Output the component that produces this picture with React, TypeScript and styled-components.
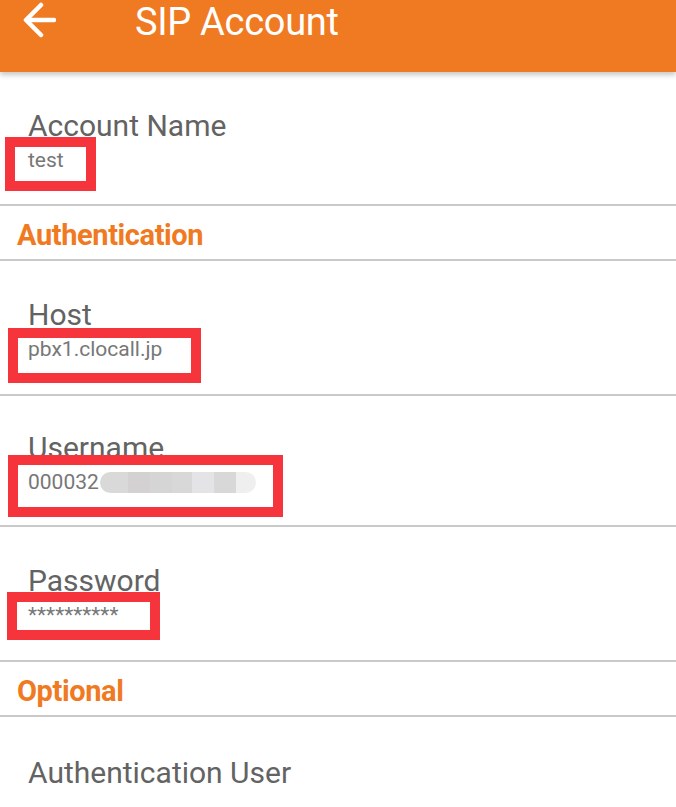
import React from "react";
import styled, { createGlobalStyle } from "styled-components";

const Global = createGlobalStyle`
  html, body { margin: 0; padding: 0; background: #ffffff; }
  body { font-family: Roboto, "Liberation Sans", Arial, sans-serif; overflow: hidden; }
`;

const Page = styled.div`
  width: 676px;
  height: 807px;
  background: #ffffff;
  overflow: hidden;
  position: relative;
`;

const AppBar = styled.header`
  height: 72px;
  background: #f07a22;
  display: flex;
  align-items: flex-start;
  box-shadow: 0 3px 5px rgba(0, 0, 0, 0.22);
  position: relative;
  z-index: 2;
`;

const BackButton = styled.div`
  width: 36px;
  height: 40px;
  margin-left: 21px;
  display: flex;
  align-items: center;
  justify-content: center;
`;

const Title = styled.h1`
  margin: 0 0 0 78px;
  font-family: Roboto, "Liberation Sans", sans-serif;
  font-weight: 400;
  font-size: 38px;
  line-height: 45px;
  color: #ffffff;
  letter-spacing: -0.3px;
`;

const List = styled.div`
  display: flex;
  flex-direction: column;
`;

const FieldRow = styled.div<{ $h: number; $pad: number }>`
  position: relative;
  height: ${(p) => p.$h}px;
  box-sizing: border-box;
  padding: ${(p) => p.$pad}px 0 0 28px;
  border-bottom: 2px solid #c9c9c9;
  display: flex;
  flex-direction: column;
`;

const Label = styled.div`
  font-size: 30px;
  line-height: 36px;
  color: #636363;
  font-weight: 400;
`;

const Value = styled.div`
  font-size: 21px;
  line-height: 24px;
  margin-top: 4px;
  color: #777777;
  display: flex;
  align-items: center;
`;

const SectionHeader = styled.div`
  height: 55px;
  box-sizing: border-box;
  border-bottom: 2px solid #c9c9c9;
  padding: 4px 0 0 17px;
  display: flex;
  align-items: center;
  font-size: 29px;
  font-weight: 700;
  color: #f07a22;
  letter-spacing: -0.4px;
`;

const Mark = styled.div<{ $x: number; $y: number; $w: number; $h: number }>`
  position: absolute;
  left: ${(p) => p.$x}px;
  top: ${(p) => p.$y}px;
  width: ${(p) => p.$w}px;
  height: ${(p) => p.$h}px;
  box-sizing: border-box;
  border: 10px solid #f5343c;
  pointer-events: none;
`;

const Redacted = styled.span`
  display: inline-flex;
  height: 21px;
  width: 156px;
  border-radius: 11px;
  overflow: hidden;
  margin-left: 1px;
  filter: blur(0.6px);
`;

const Chunk = styled.span<{ $c: string; $w: number }>`
  width: ${(p) => p.$w}px;
  height: 100%;
  background: ${(p) => p.$c};
`;

const BackArrow = () => (
  <svg width="34" height="38" viewBox="0 0 34 38" fill="none">
    <path
      d="M32 19H5M19 4L4 19L19 34"
      stroke="#ffffff"
      strokeWidth="4.5"
      strokeLinecap="round"
      strokeLinejoin="round"
    />
  </svg>
);

export default function App() {
  return (
    <Page>
      <Global />
      <AppBar>
        <BackButton>
          <BackArrow />
        </BackButton>
        <Title>SIP Account</Title>
      </AppBar>
      <List>
        <FieldRow $h={134} $pad={36}>
          <Label>Account Name</Label>
          <Value>test</Value>
          <Mark $x={5} $y={65} $w={91} $h={54} />
        </FieldRow>
        <SectionHeader>Authentication</SectionHeader>
        <FieldRow $h={135} $pad={36}>
          <Label>Host</Label>
          <Value>pbx1.clocall.jp</Value>
          <Mark $x={8} $y={67} $w={193} $h={55} />
        </FieldRow>
        <FieldRow $h={131} $pad={34}>
          <Label>Username</Label>
          <Value>
            000032
            <Redacted>
              <Chunk $c="#d9d9d9" $w={28} />
              <Chunk $c="#d3d1d1" $w={22} />
              <Chunk $c="#d6d5d5" $w={22} />
              <Chunk $c="#d9d8d8" $w={20} />
              <Chunk $c="#e4e4e6" $w={22} />
              <Chunk $c="#d8d8d8" $w={22} />
              <Chunk $c="#efefef" $w={20} />
            </Redacted>
          </Value>
          <Mark $x={8} $y={59} $w={275} $h={62} />
        </FieldRow>
        <FieldRow $h={135} $pad={36}>
          <Label>Password</Label>
          <Value>**********</Value>
          <Mark $x={7} $y={65} $w={153} $h={48} />
        </FieldRow>
        <SectionHeader>Optional</SectionHeader>
        <FieldRow $h={134} $pad={38}>
          <Label>Authentication User</Label>
        </FieldRow>
      </List>
    </Page>
  );
}
